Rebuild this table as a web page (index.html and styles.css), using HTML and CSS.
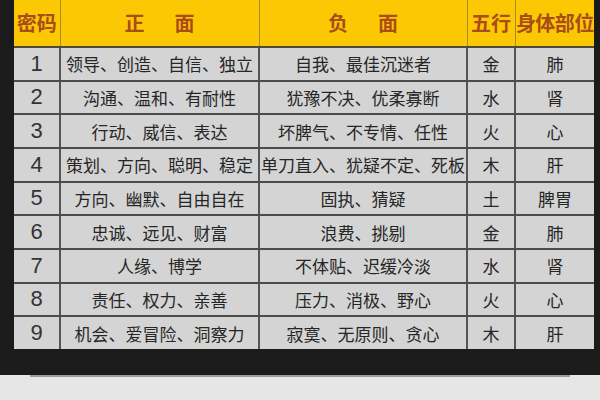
FILE: index.html
```html
<!DOCTYPE html>
<html lang="zh">
<head>
<meta charset="utf-8">
<link rel="stylesheet" href="styles.css">
</head>
<body>
<div class="screen">
  <table class="code-table">
    <colgroup>
      <col class="c-num"><col class="c-pos"><col class="c-neg"><col class="c-wx"><col class="c-body">
    </colgroup>
    <thead>
      <tr>
        <th>密码</th>
        <th><span class="spread">正　面</span></th>
        <th><span class="spread">负　面</span></th>
        <th>五行</th>
        <th class="tight">身体部位</th>
      </tr>
    </thead>
    <tbody>
      <tr><td class="num">1</td><td>领导、创造、自信、独立</td><td>自我、最佳沉迷者</td><td>金</td><td>肺</td></tr>
      <tr><td class="num">2</td><td>沟通、温和、有耐性</td><td>犹豫不决、优柔寡断</td><td>水</td><td>肾</td></tr>
      <tr><td class="num">3</td><td>行动、威信、表达</td><td>坏脾气、不专情、任性</td><td>火</td><td>心</td></tr>
      <tr><td class="num">4</td><td>策划、方向、聪明、稳定</td><td>单刀直入、犹疑不定、死板</td><td>木</td><td>肝</td></tr>
      <tr><td class="num">5</td><td>方向、幽默、自由自在</td><td>固执、猜疑</td><td>土</td><td>脾胃</td></tr>
      <tr><td class="num">6</td><td>忠诚、远见、财富</td><td>浪费、挑剔</td><td>金</td><td>肺</td></tr>
      <tr><td class="num">7</td><td>人缘、博学</td><td>不体贴、迟缓冷淡</td><td>水</td><td>肾</td></tr>
      <tr><td class="num">8</td><td>责任、权力、亲善</td><td>压力、消极、野心</td><td>火</td><td>心</td></tr>
      <tr><td class="num">9</td><td>机会、爱冒险、洞察力</td><td>寂寞、无原则、贪心</td><td>木</td><td>肝</td></tr>
    </tbody>
  </table>
  <div class="dark-band"></div>
  <div class="floor"><div class="floor-line"></div></div>
</div>
</body>
</html>
```

FILE: styles.css
```css
html, body {
  margin: 0;
  padding: 0;
  width: 600px;
  height: 400px;
  overflow: hidden;
  background: #1b1b1b;
}

.screen {
  display: flex;
  flex-direction: column;
  width: 600px;
  height: 400px;
}

.code-table {
  margin-left: 14px;
  width: 580px;
  table-layout: fixed;
  border-collapse: collapse;
  font-family: "Noto Sans CJK SC", "Noto Sans", sans-serif;
  color: #262626;
}

.c-num { width: 46px; }
.c-pos { width: 199px; }
.c-neg { width: 208px; }
.c-wx { width: 48px; }
.c-body { width: 79px; }

.code-table th {
  height: 46px;
  padding: 0;
  background: #fcc804;
  color: #a94c18;
  font-size: 20px;
  font-weight: 700;
  text-align: center;
  white-space: nowrap;
  border-left: 1px solid #a88a2a;
  border-bottom: 2px solid #4e4a40;
  line-height: 1;
}
.code-table th:first-child { border-left: none; }

.spread { letter-spacing: 5px; padding-left: 5px; }
.tight { letter-spacing: -0.6px; }

.code-table td {
  height: 31.67px;
  padding: 0;
  background: #d4d4d4;
  font-size: 17px;
  text-align: center;
  white-space: nowrap;
  overflow: visible;
  line-height: 1;
  border-left: 2px solid #555555;
  border-bottom: 2px solid #4c4c4c;
}
.code-table td:first-child { border-left: none; }
.code-table tbody tr:last-child td { border-bottom: none; }

.code-table td.num {
  font-family: "Liberation Sans Narrow", "Liberation Sans", "DejaVu Sans", sans-serif;
  font-size: 22px;
  color: #333333;
}

.dark-band {
  height: 26px;
  background: #1b1b1b;
}

.floor {
  flex: 1;
  background: #e6e6e6;
}
.floor-line {
  margin-left: 30px;
  width: 540px;
  height: 2px;
  background: #9a9a9a;
}
```
